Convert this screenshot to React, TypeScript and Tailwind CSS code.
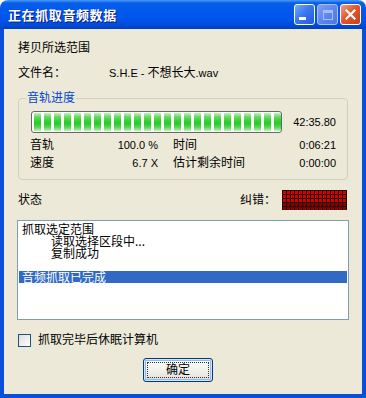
import React from 'react';

const chunks = Array.from({ length: 25 });
const leds = Array.from({ length: 80 });

const Num: React.FC<{ children: React.ReactNode }> = ({ children }) => (
  <span className="text-[11px]">{children}</span>
);

export default function App() {
  return (
    <div className="w-[366px] h-[398px] bg-white flex flex-col font-['Liberation_Sans','Noto_Sans_CJK_SC',sans-serif] text-[12px] text-black">
      {/* title bar */}
      <div className="h-[29px] shrink-0 rounded-t-[8px] flex items-center pl-[8px] pr-[5px] bg-[linear-gradient(180deg,#4a9bff_0%,#0a5fe6_10%,#0058ee_35%,#0055e8_70%,#0048d4_90%,#003fc0_100%)]">
        <span className="font-bold text-[13px] tracking-[0.6px] text-white [text-shadow:1px_1px_#0a1883] font-['Noto_Sans_CJK_SC',sans-serif]">
          正在抓取音频数据
        </span>
        <div className="ml-auto flex gap-[2px]">
          <div className="w-[21px] h-[21px] rounded-[3px] border border-white bg-[linear-gradient(135deg,#7aa9ff_0%,#3b78f0_45%,#2258e0_100%)] relative">
            <div className="absolute left-[4px] top-[12px] w-[7px] h-[3px] bg-white" />
          </div>
          <div className="w-[21px] h-[21px] rounded-[3px] border border-[#a9c1f4] bg-[linear-gradient(135deg,#7f9ff0_0%,#5f86ec_50%,#4d76e4_100%)] flex items-center justify-center">
            <div className="w-[10px] h-[10px] border border-[#a5bdf2] border-t-[3px]" />
          </div>
          <div className="w-[21px] h-[21px] rounded-[3px] border border-white bg-[linear-gradient(135deg,#f0a080_0%,#e2582e_45%,#c8401a_100%)] flex items-center justify-center">
            <svg width="11" height="11" viewBox="0 0 11 11">
              <path d="M1.5 1.5 L9.5 9.5 M9.5 1.5 L1.5 9.5" stroke="white" strokeWidth="2.2" strokeLinecap="square" />
            </svg>
          </div>
        </div>
      </div>

      {/* body */}
      <div className="flex-1 flex flex-col bg-[#ECE9D8] border-x-4 border-b-4 border-[#0a4fdc] px-[14px]">
        <div className="mt-[11px] h-[16px] leading-[16px]">拷贝所选范围</div>
        <div className="mt-[9px] h-[16px] leading-[16px] flex">
          <span className="w-[91px]">文件名：</span>
          <span>
            <Num>S.H.E - </Num>不想长大<Num>.wav</Num>
          </span>
        </div>

        {/* group box */}
        <div className="mt-[17px] relative border border-[#D0D0BF] rounded-[4px] pt-[12px] pl-[12px] pr-[11px] pb-[7px]">
          <span className="absolute left-[7px] top-[-9px] px-[1px] bg-[#ECE9D8] text-[#0046D5] leading-[16px]">
            音轨进度
          </span>
          <div className="flex items-center">
            <div className="w-[252px] h-[22px] rounded-[3px] border border-[#686868] bg-white py-px pl-[2px] flex gap-[3px]">
              {chunks.map((_, i) => (
                <div
                  key={i}
                  className="w-[7px] h-full bg-[linear-gradient(180deg,#c6f2c0_0%,#63da5e_22%,#2ccc2c_50%,#2ccc2c_62%,#63da5e_82%,#c6f2c0_100%)]"
                />
              ))}
            </div>
            <span className="ml-[11px] text-[11px]">42:35.80</span>
          </div>
          <div className="mt-[3px] -ml-px h-[18px] leading-[18px] flex">
            <div className="w-[128px] flex justify-between">
              <span>音轨</span>
              <Num>100.0 %</Num>
            </div>
            <div className="ml-[15px] flex-1 flex justify-between">
              <span>时间</span>
              <Num>0:06:21</Num>
            </div>
          </div>
          <div className="-ml-px h-[18px] leading-[18px] flex">
            <div className="w-[128px] flex justify-between">
              <span>速度</span>
              <Num>6.7 X</Num>
            </div>
            <div className="ml-[15px] flex-1 flex justify-between">
              <span>估计剩余时间</span>
              <Num>0:00:00</Num>
            </div>
          </div>
        </div>

        {/* status row */}
        <div className="mt-[10px] h-[20px] flex items-center">
          <span>状态</span>
          <span className="ml-auto">纠错：</span>
          <div className="ml-[6px] mr-px w-[65px] h-[20px] bg-[#2a0000] pl-px pt-px grid grid-cols-[repeat(16,3px)] gap-px overflow-hidden">
            {leds.map((_, i) => (
              <div
                key={i}
                className={i < 48 ? 'w-[3px] h-[3px] bg-[#d40000]' : 'w-[3px] h-[3px] bg-[#8c0000]'}
              />
            ))}
          </div>
        </div>

        {/* list box */}
        <div className="mt-[10px] -mx-px h-[100px] border border-[#7F9DB9] bg-white pt-[2px] px-px font-['Noto_Sans_CJK_SC',sans-serif] text-[12px] leading-[12px]">
          <div className="h-[12px] pl-[3px]">抓取选定范围</div>
          <div className="h-[12px] pl-[32px]">读取选择区段中...</div>
          <div className="h-[12px] pl-[32px]">复制成功</div>
          <div className="h-[12px]" />
          <div className="h-[12px] pl-[3px] bg-[#316AC5] text-white">音频抓取已完成</div>
        </div>

        {/* checkbox */}
        <div className="mt-[14px] h-[13px] flex items-center">
          <div className="w-[13px] h-[13px] border border-[#1C5180] bg-[linear-gradient(135deg,#dcdcd7,#ffffff)]" />
          <span className="ml-[7px] leading-[13px]">抓取完毕后休眠计算机</span>
        </div>

        {/* ok button */}
        <div className="mt-[11px] ml-[125px] w-[70px] h-[24px] rounded-[3px] border border-[#003C74] bg-[linear-gradient(180deg,#ffffff_0%,#f4f4f0_40%,#e6e5de_85%,#d6d0c5_100%)] shadow-[inset_0_0_0_1px_#cee7ff,inset_0_0_0_2px_#98b8ea]">
          <div className="m-[3px] h-[16px] border border-dotted border-[#333] flex items-center justify-center leading-[14px]">
            确定
          </div>
        </div>
      </div>
    </div>
  );
}
